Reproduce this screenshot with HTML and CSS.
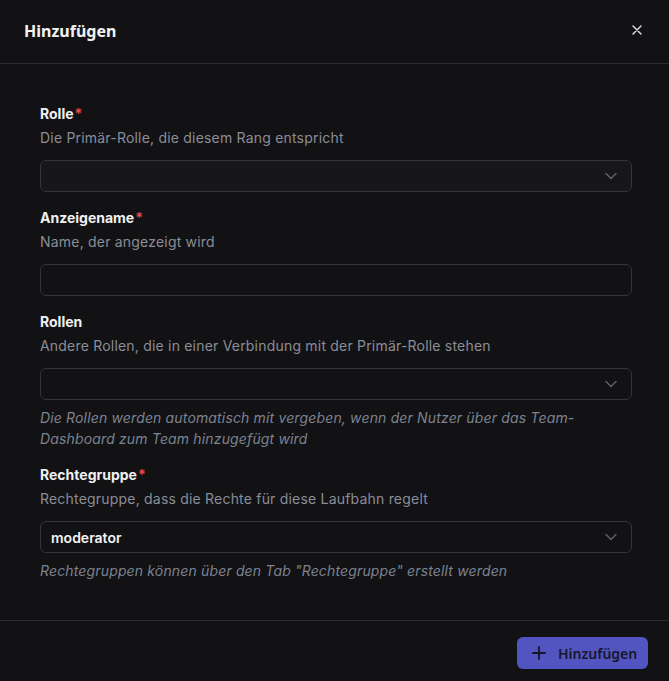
FILE: index.html
```html
<!DOCTYPE html>
<html lang="de">
<head>
<meta charset="utf-8">
<link rel="stylesheet" href="styles.css">
</head>
<body>
<div class="modal">
  <header class="modal-header">
    <h2 class="modal-title">Hinzufügen</h2>
    <button class="close" aria-label="Schließen">
      <svg width="10" height="10" viewBox="0 0 10 10"><path d="M1 1L9 9M9 1L1 9" stroke="#e6e6e8" stroke-width="1.4" stroke-linecap="round"/></svg>
    </button>
  </header>
  <div class="modal-body">
    <div class="field">
      <label class="label">Rolle<span class="req">*</span></label>
      <div class="desc">Die Primär-Rolle, die diesem Rang entspricht</div>
      <div class="select filled-bg">
        <span class="value"></span>
        <svg class="chev" width="12" height="8" viewBox="0 0 12 8"><path d="M1 1.5L6 6.5L11 1.5" fill="none" stroke="#5c5f6c" stroke-width="1.5" stroke-linecap="round" stroke-linejoin="round"/></svg>
      </div>
    </div>
    <div class="field">
      <label class="label">Anzeigename<span class="req">*</span></label>
      <div class="desc">Name, der angezeigt wird</div>
      <div class="input"></div>
    </div>
    <div class="field">
      <label class="label">Rollen</label>
      <div class="desc">Andere Rollen, die in einer Verbindung mit der Primär-Rolle stehen</div>
      <div class="select">
        <span class="value"></span>
        <svg class="chev" width="12" height="8" viewBox="0 0 12 8"><path d="M1 1.5L6 6.5L11 1.5" fill="none" stroke="#5c5f6c" stroke-width="1.5" stroke-linecap="round" stroke-linejoin="round"/></svg>
      </div>
      <div class="help">Die Rollen werden automatisch mit vergeben, wenn der Nutzer über das Team-Dashboard zum Team hinzugefügt wird</div>
    </div>
    <div class="field">
      <label class="label">Rechtegruppe<span class="req">*</span></label>
      <div class="desc">Rechtegruppe, dass die Rechte für diese Laufbahn regelt</div>
      <div class="select">
        <span class="value">moderator</span>
        <svg class="chev" width="12" height="8" viewBox="0 0 12 8"><path d="M1 1.5L6 6.5L11 1.5" fill="none" stroke="#5c5f6c" stroke-width="1.5" stroke-linecap="round" stroke-linejoin="round"/></svg>
      </div>
      <div class="help">Rechtegruppen können über den Tab "Rechtegruppe" erstellt werden</div>
    </div>
  </div>
  <footer class="modal-footer">
    <button class="primary">
      <svg width="14" height="14" viewBox="0 0 14 14"><path d="M7 1V13M1 7H13" stroke="#15152a" stroke-width="1.8" stroke-linecap="round"/></svg>
      <span>Hinzufügen</span>
    </button>
  </footer>
</div>
</body>
</html>
```
FILE: styles.css
```css
* { box-sizing: border-box; }
html, body { margin: 0; padding: 0; background: #121214; }
body { font-family: Inter, "Noto Sans", sans-serif; color: #ececee; }
.modal {
  width: 669px;
  height: 681px;
  background: #121214;
  border-radius: 6px 6px 0 0;
  display: flex;
  flex-direction: column;
}
.modal-header {
  height: 64px;
  border-bottom: 1px solid #2c2c30;
  display: flex;
  align-items: center;
  justify-content: space-between;
  padding: 0 24px 0 24px;
}
.modal-title {
  margin: 0;
  font-family: "Noto Sans", sans-serif;
  font-size: 16px;
  font-weight: 700;
  color: #f2f2f4;
  position: relative;
  top: -1px;
}
.close {
  background: none;
  border: 0;
  padding: 0;
  width: 20px;
  height: 20px;
  display: flex;
  align-items: center;
  justify-content: center;
  margin-right: -2px;
  position: relative;
  top: -2px;
}
.modal-body {
  flex: 1;
  padding: 40px 37px 0 40px;
  display: flex;
  flex-direction: column;
  gap: 16px;
}
.field { display: flex; flex-direction: column; }
.label {
  font-size: 14px;
  font-weight: 700;
  line-height: 20px;
  color: #f0f0f2;
}
.req { color: #e5484d; margin-left: 1px; }
.desc {
  font-size: 14px;
  line-height: 20px;
  letter-spacing: 0.2px;
  color: #8a8d98;
  margin-top: 4px;
  margin-bottom: 12px;
}
.select, .input {
  height: 32px;
  border: 1px solid #34353a;
  border-radius: 6px;
  display: flex;
  align-items: center;
  justify-content: space-between;
  padding: 0 14px 0 10px;
  background: #121214;
}
.filled-bg { background: #17171a; }
.value {
  font-size: 14px;
  font-weight: 600;
  color: #f2f2f4;
}
.chev { flex: none; }
.help {
  font-size: 14px;
  font-style: italic;
  line-height: 21px;
  letter-spacing: 0.15px;
  color: #7c8292;
  margin-top: 7px;
  max-width: 545px;
}
.modal-footer {
  height: 61px;
  border-top: 1px solid #2c2c30;
  display: flex;
  justify-content: flex-end;
  align-items: flex-start;
  padding: 16px 21px 0 0;
}
.primary {
  height: 32px;
  width: 131px;
  border: 0;
  border-radius: 6px;
  background: #5254c0;
  color: #17172b;
  font-family: "Noto Sans", sans-serif;
  font-size: 14px;
  font-weight: 600;
  display: flex;
  align-items: center;
  justify-content: flex-start;
  gap: 12px;
  padding: 0 8px 0 15px;
}
```
